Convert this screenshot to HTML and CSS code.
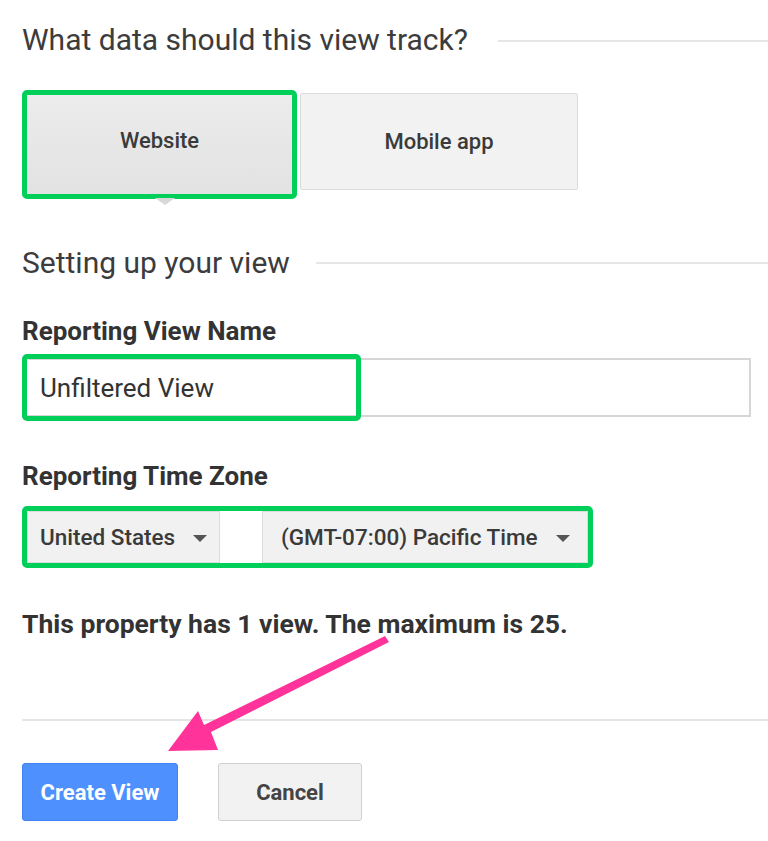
FILE: index.html
```html
<!DOCTYPE html>
<html lang="en">
<head>
  <meta charset="UTF-8" />
  <meta name="viewport" content="width=device-width, initial-scale=1.0">
  <title>Create View</title>
  <link rel="stylesheet" href="styles.css">
</head>
<body>
  <div class="page">
    <div class="section-title title-track">
      <h2>What data should this view track?</h2>
      <div class="rule"></div>
    </div>

    <div class="tabs">
      <button class="tab tab-active">Website</button>
      <button class="tab">Mobile app</button>
    </div>

    <div class="section-title title-setup">
      <h2>Setting up your view</h2>
      <div class="rule"></div>
    </div>

    <label class="field-label label-name">Reporting View Name</label>
    <div class="name-field">
      <input class="name-input" type="text" value="Unfiltered View">
      <div class="highlight"></div>
    </div>

    <label class="field-label label-zone">Reporting Time Zone</label>
    <div class="zone-row">
      <div class="select select-country">United States <span class="caret"></span></div>
      <div class="select-gap"></div>
      <div class="select select-zone">(GMT-07:00) Pacific Time <span class="caret"></span></div>
    </div>

    <p class="view-count">This property has 1 view. The maximum is 25.</p>

    <div class="divider"></div>

    <div class="actions">
      <button class="btn btn-primary">Create View</button>
      <button class="btn btn-cancel">Cancel</button>
    </div>

    <!-- annotation arrow -->
    <svg class="pointer-arrow" width="768" height="841" viewBox="0 0 768 841">
      <path d="M385 636 L389 642 L211 732 L218 750 L168 751 L198 711 L204 725 Z" fill="#ff3399" />
    </svg>
  </div>
</body>
</html>
```

FILE: styles.css
```css
* {
  margin: 0;
  padding: 0;
  box-sizing: border-box;
}

body {
  font-family: 'Roboto', 'Liberation Sans', sans-serif;
  background: white;
  color: #333;
}

.page {
  position: relative;
  width: 768px;
  height: 841px;
  padding: 23px 0 0 22px;
  overflow: hidden;
}

.section-title {
  display: flex;
  align-items: center;
  gap: 30px;
}

.section-title h2 {
  font-size: 30px;
  font-weight: 400;
  line-height: 34px;
  color: #3c3c3c;
  white-space: nowrap;
}

.rule {
  flex: 1;
  height: 2px;
  background: #e6e6e6;
}

.title-track .rule {
  margin-top: 2px;
}

.title-setup {
  margin-top: 47px;
  gap: 26px;
}

.tabs {
  display: flex;
  align-items: flex-start;
  gap: 3px;
  margin-top: 33px;
}

.tab {
  font-family: inherit;
  font-size: 22px;
  font-weight: 500;
  color: #3a3a3a;
  background: #f2f2f2;
  border: 1px solid #dcdcdc;
  border-radius: 2px;
  cursor: pointer;
}

.tab:not(.tab-active) {
  width: 278px;
  height: 97px;
  margin-top: 3px;
}

.tab-active {
  position: relative;
  width: 275px;
  height: 109px;
  background: linear-gradient(#ececec, #e2e2e2);
  border: 5px solid #00d05a;
  border-radius: 5px;
  padding-bottom: 8px;
}

.tab-active::after {
  content: "";
  position: absolute;
  left: 128px;
  bottom: -11px;
  border-left: 10px solid transparent;
  border-right: 10px solid transparent;
  border-top: 7px solid #d8d8d8;
}

.field-label {
  display: block;
  font-size: 26px;
  font-weight: 700;
  line-height: 30px;
  color: #333;
}

.label-name {
  margin-top: 36px;
}

.name-field {
  position: relative;
  width: 729px;
  margin-top: 12px;
}

.name-input {
  display: block;
  width: 100%;
  height: 59px;
  padding: 0 16px;
  font-family: inherit;
  font-size: 26px;
  color: #333;
  border: 2px solid #d6d6d6;
  border-radius: 0;
  outline: none;
}

.highlight {
  position: absolute;
  left: 0;
  top: -4px;
  width: 339px;
  height: 67px;
  border: 5px solid #00d05a;
  border-radius: 5px;
  pointer-events: none;
}

.label-zone {
  margin-top: 44px;
}

.zone-row {
  display: flex;
  width: 571px;
  height: 62px;
  margin-top: 15px;
  border: 5px solid #00d05a;
  border-radius: 5px;
}

.select {
  display: flex;
  align-items: center;
  gap: 18px;
  padding-left: 12px;
  font-size: 22.5px;
  font-weight: 500;
  color: #3a3a3a;
  background: #f1f1f1;
  border: 1px solid #dcdcdc;
}

.select-country {
  width: 193px;
}

.select-gap {
  width: 42px;
  background: white;
}

.select-zone {
  flex: 1;
  padding-left: 18px;
}

.caret {
  width: 0;
  height: 0;
  border-left: 7px solid transparent;
  border-right: 7px solid transparent;
  border-top: 7px solid #555;
  margin-top: 2px;
}

.view-count {
  font-size: 26.5px;
  font-weight: 700;
  line-height: 30px;
  color: #333;
  margin-top: 41px;
}

.divider {
  height: 2px;
  background: #e4e4e4;
  margin-top: 80px;
}

.actions {
  display: flex;
  gap: 40px;
  margin-top: 42px;
}

.btn {
  height: 58px;
  font-family: inherit;
  font-size: 22px;
  font-weight: 700;
  border-radius: 3px;
  cursor: pointer;
}

.btn-primary {
  width: 156px;
  color: white;
  background: #4d90fe;
  border: 1px solid #3f84f3;
}

.btn-cancel {
  width: 144px;
  color: #444;
  background: #f2f2f2;
  border: 1px solid #d0d0d0;
}

.pointer-arrow {
  position: absolute;
  left: 0;
  top: 0;
  pointer-events: none;
}
```
